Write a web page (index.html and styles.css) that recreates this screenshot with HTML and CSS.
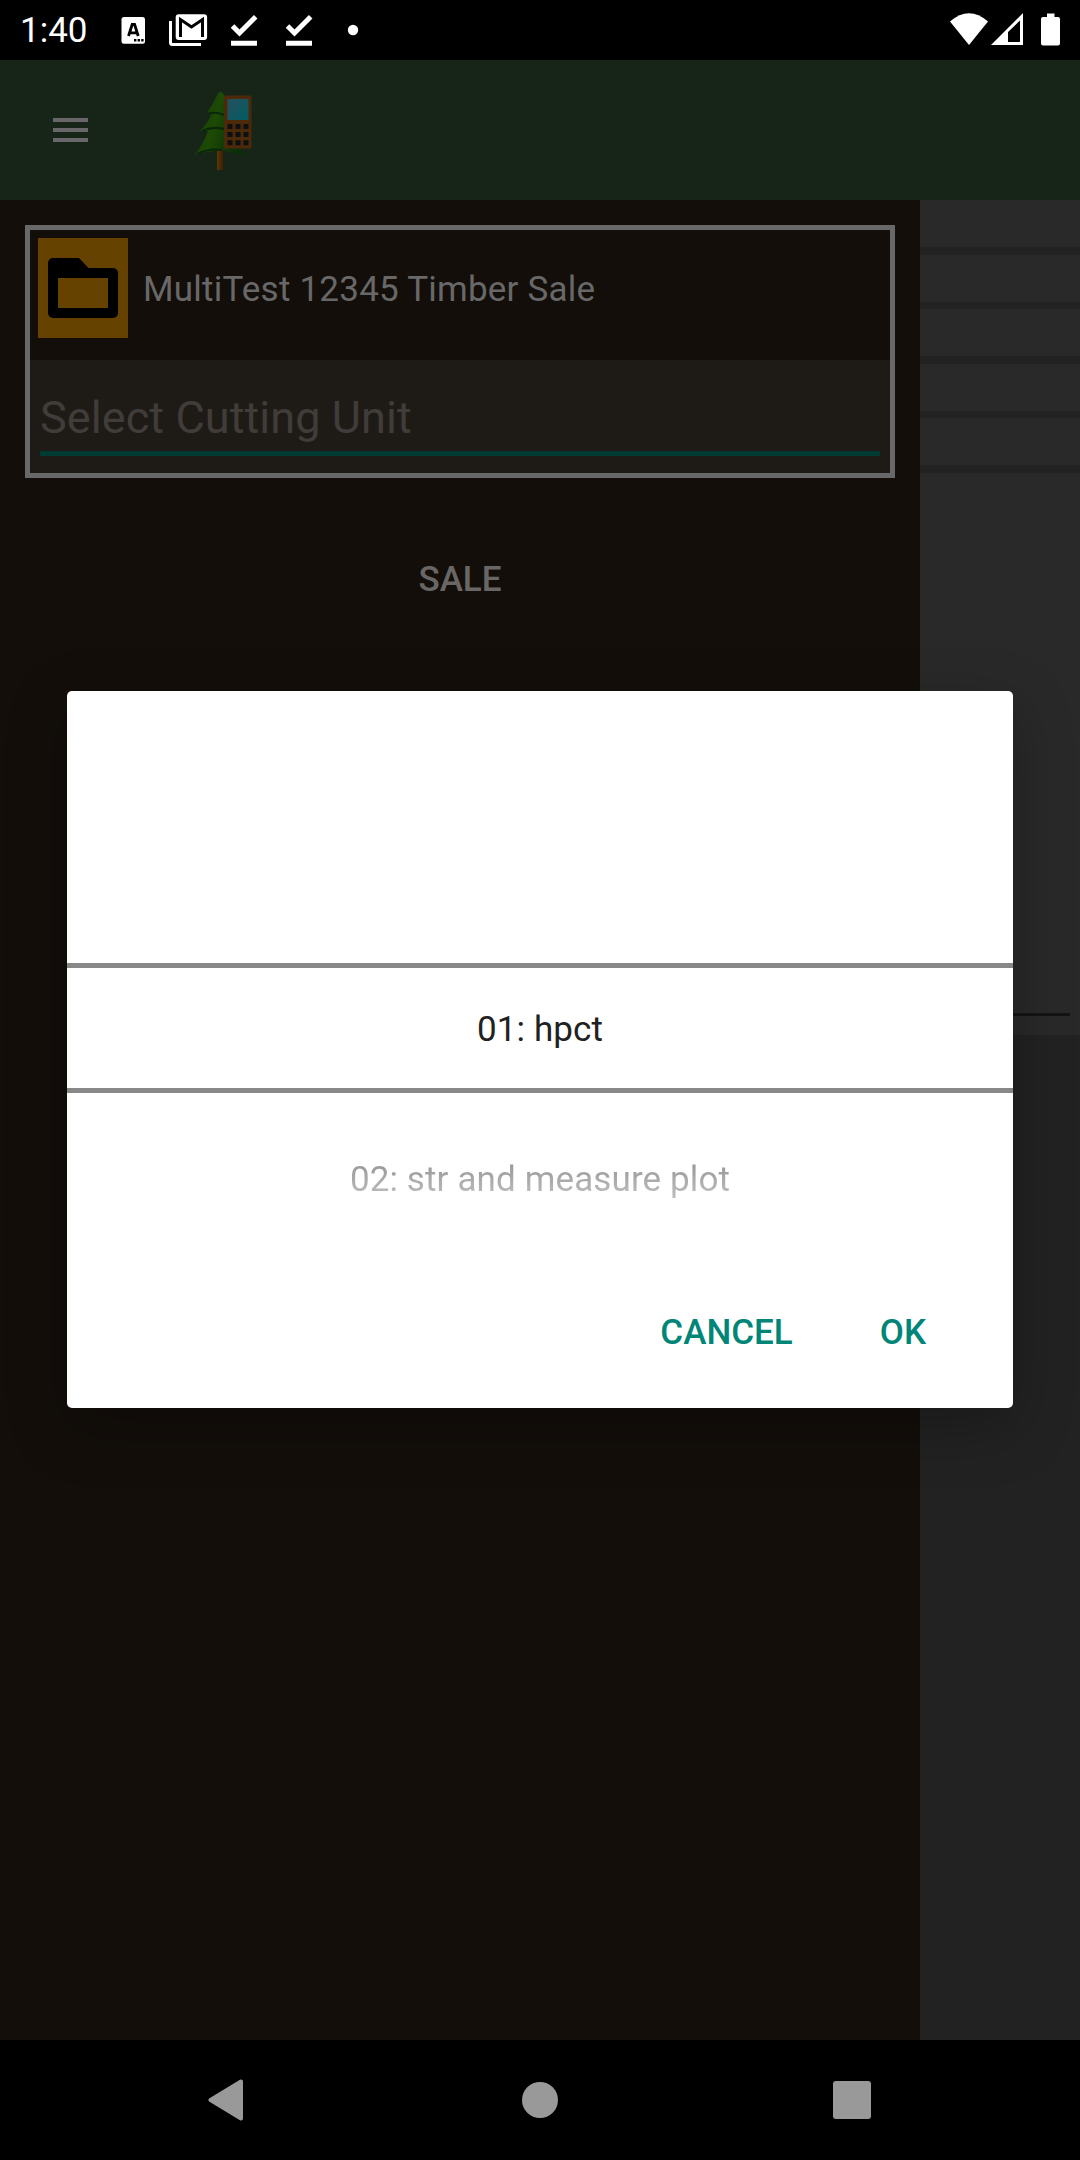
FILE: index.html
```html
<!DOCTYPE html>
<html lang="en">
<head>
<meta charset="utf-8">
<title>MultiTest 12345 Timber Sale</title>
<link rel="stylesheet" href="styles.css">
</head>
<body>
<div class="screen">
  <header class="status">
    <span class="clock">1:40</span>
    <svg class="status-left" width="244" height="60" viewBox="116 0 244 60">
      <rect x="121.5" y="17" width="23.5" height="26.7" rx="2.5" fill="#fff"/>
      <path d="M128.5 36L132.2 24.500h2.4L138.2 36M129.8 32.8h7.2" fill="none" stroke="#000" stroke-width="2.8"/>
      <path d="M134 39h2.4v2.4H134zM137.6 39h2.4v2.4h-2.4zM141.2 39h2.4v2.4h-2.4z" fill="#000"/>
      <path d="M170.5 21V42.500a2 2 0 0 0 2 2H201" fill="none" stroke="#fff" stroke-width="3"/>
      <rect x="175.700" y="14.300" width="31.400" height="25.700" rx="3" fill="#fff"/>
      <path d="M180.500 37V19.500L191.500 27L202.500 19.500V37" fill="none" stroke="#000" stroke-width="3"/>
      <path id="done" d="M232.500 26l7 7 16.200-16.200M231 43.200h26" fill="none" stroke="#fff" stroke-width="5"/>
      <use href="#done" x="55"/>
      <circle cx="353" cy="30" r="5.200" fill="#fff"/>
    </svg>
    <svg class="status-right" width="112" height="60" viewBox="950 0 112 60" fill="#fff">
      <path d="M950 21.500Q969 5 988 21.500L969 45z"/>
      <path fill-rule="evenodd" d="M991 45L1023 13V45zM1008 32V42h12V20.500z"/>
      <path d="M1047 13.500h7.500V17h3.500a2 2 0 0 1 2 2v24.500a2 2 0 0 1-2 2h-15a2 2 0 0 1-2-2V19a2 2 0 0 1 2-2h4z"/>
    </svg>
  </header>

  <div class="toolbar">
    <svg class="menu" width="35" height="24" viewBox="0 0 35 24"><path d="M0 2h35M0 12h35M0 22h35" stroke="#696769" stroke-width="4"/></svg>
    <svg class="logo" width="58" height="80" viewBox="195 91 58 80">
      <defs>
        <linearGradient id="leaf" x1="0" x2="1" y2=".35"><stop offset="0" stop-color="#173e08"/><stop offset=".5" stop-color="#1d4a05"/><stop offset="1" stop-color="#0b2e0a"/></linearGradient>
        <linearGradient id="glass" x2="1" y2="1"><stop offset="0" stop-color="#274f5f"/><stop offset="1" stop-color="#005d60"/></linearGradient>
        <linearGradient id="trunk" x2="1"><stop offset="0" stop-color="#5b3708"/><stop offset="1" stop-color="#3c2004"/></linearGradient>
      </defs>
      <rect x="217" y="149" width="6" height="21" fill="url(#trunk)"/>
      <path d="M218.500 92.500Q221 90.500 223.500 94L238 130V149L246.500 154Q238 156 231 152.500Q222 148.500 212 151.500Q203 151.500 194.500 155.500Q203 144.500 208 131.500Q204 129.500 199.500 131.500Q208 123 211.500 114L206 114.500Q213 104.500 218.500 92.500z" fill="url(#leaf)"/>
      <path d="M207 114q8-3 17 1M202 131q11-5 22-2M197 154q12-6 25-4" fill="none" stroke="#0a2809" stroke-width="2"/>
      <rect x="224" y="95.500" width="27.500" height="53" rx="1" fill="#4c2909"/>
      <rect x="227.500" y="99" width="21" height="21" fill="url(#glass)"/>
      <path d="M227.500 126.500h22M227.500 134.600h22M227.500 142.700h22" stroke="#0c1013" stroke-width="5" stroke-dasharray="5 3"/>
    </svg>
  </div>

  <main class="content">
    <aside class="drawer">
      <section class="sale-card">
        <div class="sale-row">
          <span class="folder">
            <svg width="70" height="60" viewBox="0 0 70 60"><path fill-rule="evenodd" d="M5 0H31L40.500 10H65a5 5 0 0 1 5 5V55a5 5 0 0 1-5 5H5a5 5 0 0 1-5-5V5a5 5 0 0 1 5-5zM10 20V50H60V20z"/></svg>
          </span>
          <span class="sale-name">MultiTest 12345 Timber Sale</span>
        </div>
        <div class="unit"><div class="unit-field">Select Cutting Unit</div></div>
      </section>
      <div class="sale-button">SALE</div>
    </aside>
    <div class="page">
      <div class="row"></div><div class="row"></div><div class="row"></div><div class="row"></div><div class="row"></div>
      <div class="details"><div class="field-line"></div></div>
    </div>
  </main>

  <nav class="navbar">
    <svg width="36" height="42" viewBox="0 0 36 42"><path d="M33 2.500V39.500L2.500 21z" fill="#999" stroke="#999" stroke-width="4" stroke-linejoin="round"/></svg>
    <span class="home"></span>
    <span class="recent"></span>
  </nav>

  <div class="dialog">
    <div class="spacer"></div>
    <div class="selected">01: hpct</div>
    <div class="option"><span>02: str and measure plot</span></div>
    <div class="actions"><span>CANCEL</span><span>OK</span></div>
  </div>
</div>
</body>
</html>
```
FILE: styles.css
```css
* { box-sizing: border-box; }
body { margin: 0; background: #000; font-family: Roboto, sans-serif; font-size: 35px; }
svg { display: block; }
.screen { position: relative; width: 1080px; height: 2160px; display: flex; flex-direction: column; overflow: hidden; }

.status { height: 60px; display: flex; color: #fff; }
.clock { width: 96px; margin-left: 20px; line-height: 62px; }
.status-right { margin-left: auto; margin-right: 18px; }

.toolbar { height: 140px; background: #172518; display: flex; align-items: center; padding-left: 53px; }
.logo { margin: 2px 0 0 107px; }

.content { height: 1840px; display: flex; }
.drawer { width: 920px; background: #130e0a; padding: 25px 25px 0; }
.sale-card { height: 253px; border: 5px solid #686868; color: #686868; }
.sale-row { height: 130px; padding: 8px 8px 0; display: flex; }
.folder { width: 90px; height: 100px; background: #664200; display: flex; align-items: center; justify-content: center; }
.sale-name { margin-left: 15px; line-height: 103px; letter-spacing: .22px; }
.unit { height: 113px; background: #1e1b17; padding: 0 10px; }
.unit-field { height: 96px; border-bottom: 5px solid #003b33; color: #403c39; font-size: 45px; line-height: 115px; letter-spacing: .08px; }
.sale-button { margin-top: 72px; text-align: center; line-height: 60px; color: #696765; font-weight: 500; }

.page { flex: 1; background: #222; display: flex; flex-direction: column; gap: 7.5px; }
.row { height: 47px; background: #292929; }
.details { height: 562px; background: #292929; padding-right: 10px; display: flex; align-items: flex-end; }
.field-line { flex: 1; height: 3px; margin-bottom: 19px; background: #141414; }

.navbar { height: 120px; background: #000; display: flex; align-items: center; justify-content: space-between; padding: 0 209px 0 208px; }
.home { width: 36px; height: 36px; border-radius: 50%; background: #999; margin-left: 3px; }
.recent { width: 38px; height: 38px; border-radius: 3px; background: #999; }

.dialog { position: absolute; left: 67px; top: 691px; width: 946px; height: 717px; border-radius: 5px; background: #fff; box-shadow: 0 18px 60px rgba(0, 0, 0, .26); text-align: center; }
.spacer { height: 272px; }
.selected { height: 130px; border: solid #888; border-width: 5px 0; line-height: 123px; color: #212121; letter-spacing: .12px; }
.option { height: 170px; padding-top: 66px; }
.option span { display: inline-block; line-height: 41px; color: transparent; background: linear-gradient(#929292, #c2c2c2); background-clip: text; letter-spacing: .12px; }
.actions { display: flex; justify-content: flex-end; gap: 87px; padding-right: 87px; line-height: 140px; color: #008577; font-weight: 500; }
```
